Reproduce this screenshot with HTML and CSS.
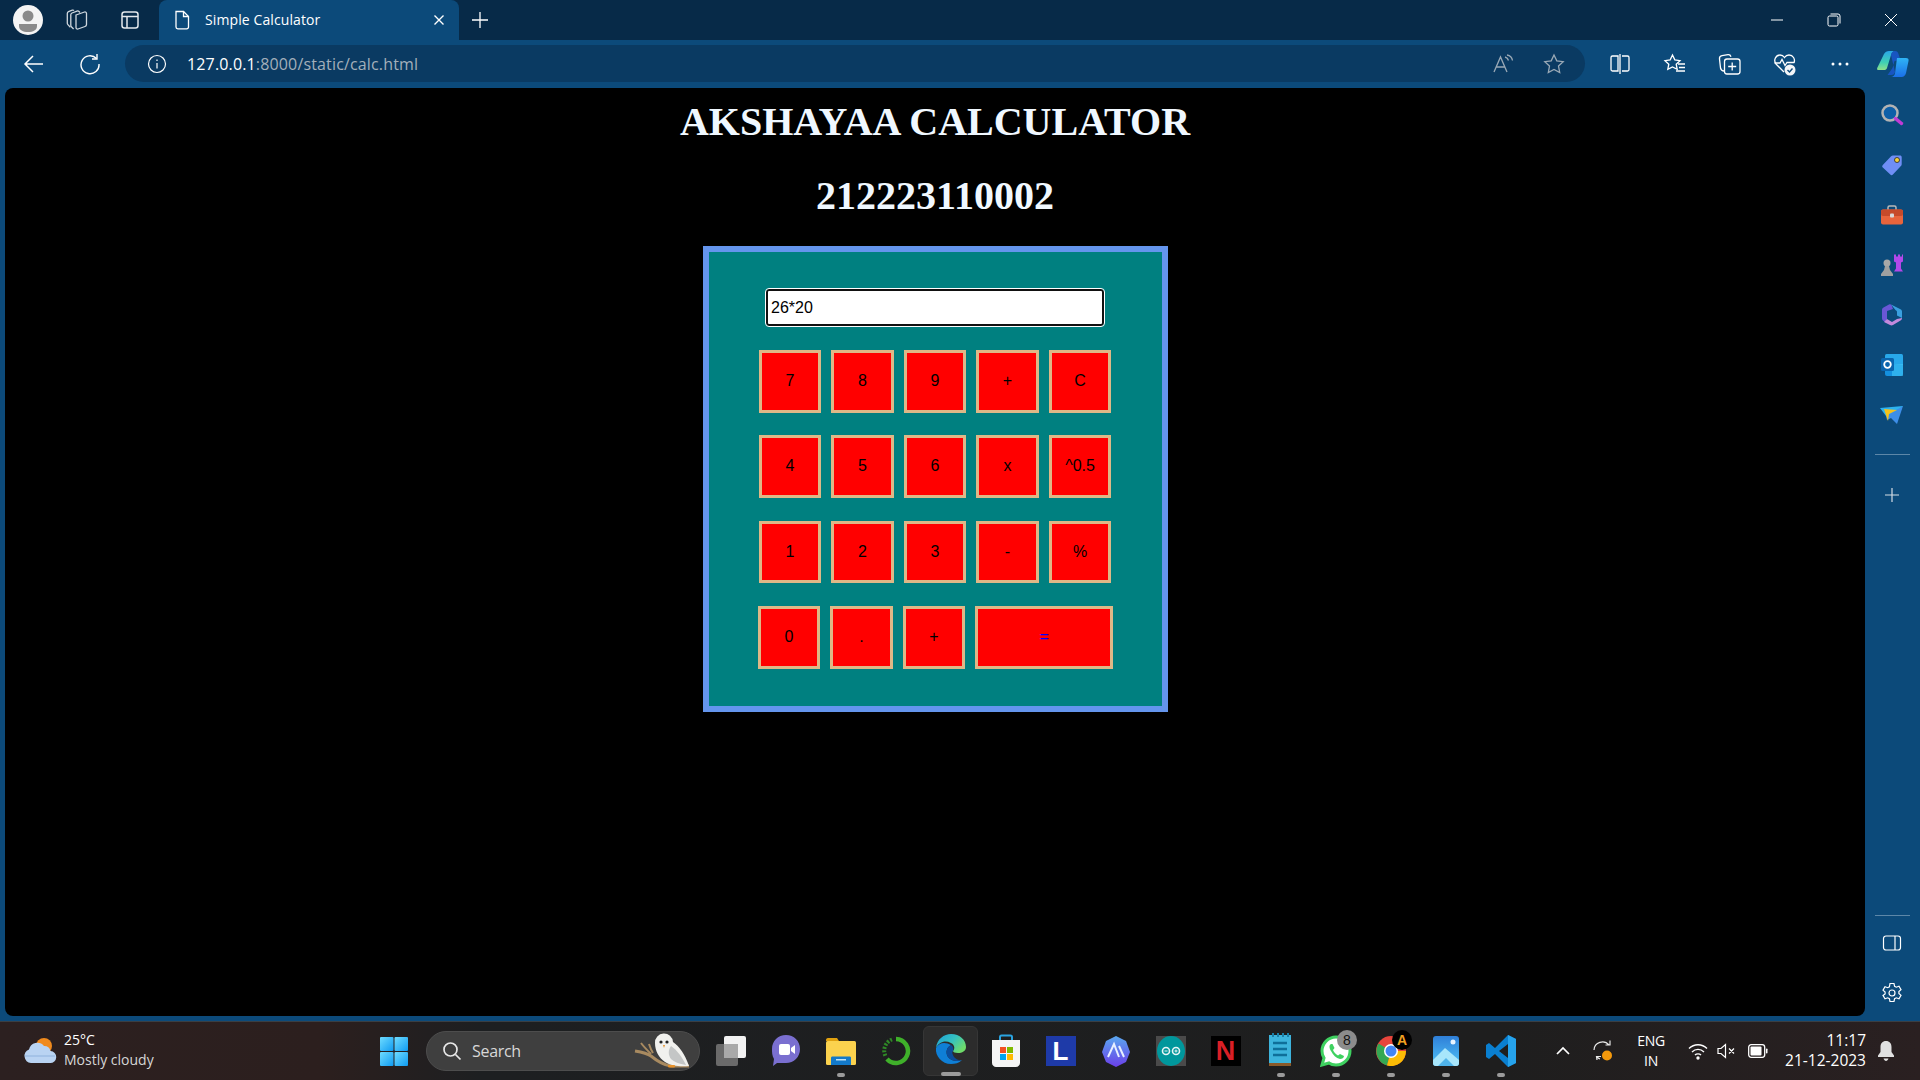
FILE: index.html
```html
<!DOCTYPE html>
<html lang="en">
<head>
    <meta charset="UTF-8">
    <title>Simple Calculator</title>
    <link rel="stylesheet" href="styles.css">
</head>
<body>
<div class="desktop">

    <!-- browser title bar -->
    <div class="titlebar">
        <div class="profile">
            <svg width="30" height="30" viewBox="0 0 30 30"><circle cx="15" cy="15" r="15" fill="#f4f4f4"/><circle cx="15" cy="11" r="5.500" fill="#8a8a8a"/><path d="M6 19h18v2c0 4-4 6-9 6s-9-2-9-6z" fill="#8a8a8a"/></svg>
        </div>
        <div class="title-btn workspaces">
            <svg width="24" height="22" viewBox="0 0 24 22" fill="none" stroke="#cfd7de" stroke-width="1.300"><path d="M11 6l8.500-3c1-.3 2 .3 2 1.500v11c0 1-.6 1.700-1.500 2l-7 2.500c-1 .3-2-.3-2-1.500V7.500c0-.7 0-1.200 0-1.500z"/><path d="M15 3.500l-1-1c-.6-.6-1.200-.7-2-.4L7 4c-.8.3-1.200 1-1.200 1.800v10.500c0 .7.300 1.200.8 1.700l2 2"/><path d="M9 1.500C8.500 1 8 1 7.300 1.200L3.500 2.600C2.700 2.900 2.300 3.500 2.300 4.400v9.800c0 .7.300 1.200.8 1.700l2.300 2.300"/></svg>
        </div>
        <div class="title-btn tab-actions">
            <svg width="20" height="20" viewBox="0 0 20 20" fill="none" stroke="#e3e8ec" stroke-width="1.500"><rect x="2" y="2" width="16" height="16" rx="2.500"/><path d="M2 6.500h16M7 6.500V18"/></svg>
        </div>
        <div class="tab">
            <svg class="tab-icon" width="18" height="20" viewBox="0 0 18 20" fill="none" stroke="#fff" stroke-width="1.300"><path d="M3 1.500h7.500l5 5V17a1.800 1.800 0 0 1-1.800 1.800H4.800A1.800 1.800 0 0 1 3 17z"/><path d="M10.500 1.500v5h5"/></svg>
            <span class="tab-title">Simple Calculator</span>
            <svg class="tab-close" width="12" height="12" viewBox="0 0 12 12" stroke="#fff" stroke-width="1.400"><path d="M1.500 1.500l9 9M10.500 1.500l-9 9"/></svg>
        </div>
        <div class="title-btn new-tab">
            <svg width="18" height="18" viewBox="0 0 18 18" stroke="#fff" stroke-width="1.300"><path d="M9 1v16M1 9h16"/></svg>
        </div>
        <div class="window-controls">
            <div class="window-btn"><svg width="14" height="14" viewBox="0 0 14 14" stroke="#fff" stroke-width="1"><path d="M1 7h12"/></svg></div>
            <div class="window-btn"><svg width="14" height="14" viewBox="0 0 14 14" fill="none" stroke="#fff" stroke-width="1"><rect x="1" y="3" width="10" height="10" rx="1.500"/><path d="M3.500 1h7.500a2 2 0 0 1 2 2v7.500"/></svg></div>
            <div class="window-btn"><svg width="14" height="14" viewBox="0 0 14 14" stroke="#fff" stroke-width="1"><path d="M1 1l12 12M13 1L1 13"/></svg></div>
        </div>
    </div>

    <!-- address bar row -->
    <div class="toolbar">
        <div class="nav-btn">
            <svg width="22" height="20" viewBox="0 0 22 20" fill="none" stroke="#fff" stroke-width="1.500"><path d="M20 10H2M10 2l-8 8 8 8"/></svg>
        </div>
        <div class="nav-btn">
            <svg width="22" height="22" viewBox="0 0 22 22" fill="none" stroke="#fff" stroke-width="1.400"><path d="M17.500 5.500A9 9 0 1 0 20 11"/><path d="M18 1v5h-5"/></svg>
        </div>
        <div class="address-bar">
            <svg class="info-icon" width="20" height="20" viewBox="0 0 20 20" fill="none" stroke="#fff" stroke-width="1.200"><circle cx="10" cy="10" r="8.500"/><path d="M10 9v5.500M10 5.500v1.500"/></svg>
            <span class="url"><span class="url-host">127.0.0.1</span>:8000/static/calc.html</span>
            <div class="address-actions">
                <svg width="22" height="20" viewBox="0 0 22 20" fill="none" stroke="#9aa9b6" stroke-width="1.300"><path d="M2 18L8.500 3 15 18M4.500 13h8"/><path d="M13 3c2 .5 3 1.500 3.500 3.500M15 1c3 .5 5 2.500 5.500 5.500"/></svg>
                <svg width="22" height="22" viewBox="0 0 22 22" fill="none" stroke="#9aa9b6" stroke-width="1.300"><path d="M11 2l2.800 5.900 6.400.8-4.700 4.400 1.200 6.400-5.700-3.100-5.700 3.100 1.200-6.400L1.800 8.700l6.400-.8z"/></svg>
            </div>
        </div>
        <div class="tool-buttons">
            <div class="tool-btn"><svg width="22" height="22" viewBox="0 0 22 22" fill="none" stroke="#fff" stroke-width="1.300"><path d="M9 3H3.500A1.500 1.500 0 0 0 2 4.500v12A1.500 1.500 0 0 0 3.500 18H9zM11 1v20M13 3h5.500A1.500 1.500 0 0 1 20 4.500v12a1.500 1.500 0 0 1-1.500 1.500H13"/></svg></div>
            <div class="tool-btn"><svg width="24" height="22" viewBox="0 0 24 22" fill="none" stroke="#fff" stroke-width="1.300"><path d="M9.500 2l2.300 4.900 5.200.7-3.800 3.600 1 5.200-4.700-2.500-4.700 2.500 1-5.200L2 7.600l5.200-.7z"/><path d="M15 11h7M16 14.500h6M13 18h9"/></svg></div>
            <div class="tool-btn"><svg width="24" height="24" viewBox="0 0 24 24" fill="none" stroke="#fff" stroke-width="1.300"><path d="M6 19c-2 0-3-1-3.500-3L1.500 7C1.300 5 2 4 4 3.700l6-1c1.500-.2 2.500.5 3 2"/><rect x="6.500" y="7" width="15.500" height="15" rx="2.500"/><path d="M14.200 10.500v8M10.200 14.500h8"/></svg></div>
            <div class="tool-btn">
                <svg width="24" height="24" viewBox="0 0 24 24"><path d="M11 20L3 12C0 8 3 3 7 3c2 0 3.500 1 4.500 2.500C12.500 4 14 3 16 3c4 0 6.500 4 5 8" fill="none" stroke="#fff" stroke-width="1.300"/><path d="M1.500 11H7l2-3.500 3 6 2-3h7" fill="none" stroke="#fff" stroke-width="1.300"/><circle cx="17" cy="18" r="5.500" fill="#f4f6f8"/><path d="M14.500 18l2 2 3-3.500" fill="none" stroke="#0c4a7a" stroke-width="1.400"/></svg>
            </div>
            <div class="tool-btn"><svg width="22" height="6" viewBox="0 0 22 6" fill="#fff"><circle cx="4" cy="3" r="1.500"/><circle cx="11" cy="3" r="1.500"/><circle cx="18" cy="3" r="1.500"/></svg></div>
        </div>
        <div class="copilot">
            <svg width="32" height="28" viewBox="0 0 32 28">
                <defs>
                    <linearGradient id="copA" x1="0" y1="0" x2="0" y2="1"><stop offset="0" stop-color="#2aa6e8"/><stop offset=".6" stop-color="#3fd0b4"/><stop offset="1" stop-color="#8fe08a"/></linearGradient>
                    <linearGradient id="copB" x1="0" y1="0" x2="0" y2="1"><stop offset="0" stop-color="#2fb4f5"/><stop offset="1" stop-color="#1b6fe8"/></linearGradient>
                </defs>
                <path d="M7 4c1-2 3-3 5-3h6c-2 0-3 1-4 4l-4 13c-.5 1.500-1.500 2-3 2H1c-1 0-1-1-.8-2z" fill="url(#copA)"/>
                <path d="M14 5c.8-3 2-4 4-4 2 0 3 1 3.500 3l2 6-6 1-2 7-5 7h4c2 0 3-1 3.500-3z" fill="#1a56c9" opacity=".9"/>
                <path d="M20 8h9c2 0 3 1 2.500 3L29 23c-.5 2-2 4-4.500 4H14c2 0 3.500-1.500 4-3.500z" fill="url(#copB)"/>
            </svg>
        </div>
    </div>

    <div class="browser-body">
        <main class="page">
            <h1 class="page-title">AKSHAYAA CALCULATOR</h1>
            <h1 class="page-title">212223110002</h1>

            <div class="calculator">
                <input class="display" type="text" value="26*20">
                <div class="keypad">
                    <div class="key-row">
                        <button class="key">7</button>
                        <button class="key">8</button>
                        <button class="key">9</button>
                        <button class="key">+</button>
                        <button class="key">C</button>
                    </div>
                    <div class="key-row">
                        <button class="key">4</button>
                        <button class="key">5</button>
                        <button class="key">6</button>
                        <button class="key">x</button>
                        <button class="key">^0.5</button>
                    </div>
                    <div class="key-row">
                        <button class="key">1</button>
                        <button class="key">2</button>
                        <button class="key">3</button>
                        <button class="key">-</button>
                        <button class="key">%</button>
                    </div>
                    <div class="key-row key-row-last">
                        <button class="key">0</button>
                        <button class="key">.</button>
                        <button class="key">+</button>
                        <button class="key key-equals">=</button>
                    </div>
                </div>
            </div>
        </main>

        <aside class="sidebar">
            <div class="side-item"><svg width="24" height="24" viewBox="0 0 24 24"><circle cx="10" cy="10" r="7.500" fill="#0e5fa8" stroke="#b3b3b3" stroke-width="2.500"/><path d="M15.500 15.500l6 5" stroke="#c13bd6" stroke-width="3.500" stroke-linecap="round"/></svg></div>
            <div class="side-item"><svg width="24" height="24" viewBox="0 0 24 24"><path d="M13 2.500h7c1 0 1.700.7 1.700 1.700v7c0 .8-.2 1.300-.8 1.900l-8 8.500c-.8.800-1.800.8-2.600 0l-7.500-7c-.8-.8-.8-1.900 0-2.700l8.300-8.600c.6-.6 1.100-.8 1.900-.8z" fill="#6f8ef5"/><circle cx="17" cy="7" r="2.500" fill="#f5d13b" stroke="#222" stroke-width=".8"/></svg></div>
            <div class="side-item"><svg width="24" height="24" viewBox="0 0 24 24"><path d="M8 7V4.500C8 3.500 8.500 3 9.500 3h5c1 0 1.500.5 1.500 1.500V7" fill="none" stroke="#b9b9b9" stroke-width="1.500"/><rect x="1" y="6.500" width="22" height="15" rx="2" fill="#e8643c"/><rect x="1" y="6.500" width="22" height="6.500" rx="2" fill="#c64a2a"/><rect x="10" y="10.500" width="4" height="4" rx="1" fill="#d9d9d9"/></svg></div>
            <div class="side-item"><svg width="24" height="24" viewBox="0 0 24 24"><path d="M14 1.500h2v2h2v-2h2v2h2v-2h1v7l-2 1v6l2 3h-9l2-3v-6l-2-1z" fill="#b348ea"/><circle cx="7" cy="10" r="3.500" fill="#a8a8a8"/><path d="M5 13h4l1 4 3 4v2H1v-2l3-4z" fill="#a0a0a0"/></svg></div>
            <div class="side-item">
                <svg width="24" height="24" viewBox="0 0 24 24">
                    <path d="M2 7c0-1 .5-2 1.500-2.500L9 1.500c1-.5 2-.2 2.500.5L13 6 7 8v8l-2 3-2-1.500C2.300 17 2 16 2 15z" fill="#6a57d6"/>
                    <path d="M11 1.500l10 5c.7.500 1 1.200 1 2V15l-5-2.500V9c0-1-.5-1.500-1.300-1.800z" fill="#3aa0e0"/>
                    <path d="M7 16l5 3 5-3 5-1c0 1-.5 2-1.500 2.500L13 22c-1 .5-2 .5-3 0l-6-3z" fill="#c389dc"/>
                    <path d="M8 9l4-2 5 2v5l-5 3-4-2.500z" fill="#0c4a7a"/>
                </svg>
            </div>
            <div class="side-item"><svg width="24" height="24" viewBox="0 0 24 24"><rect x="5" y="1" width="18" height="12" rx="1.500" fill="#28a8ea"/><path d="M5 12h18v9a2 2 0 0 1-2 2H7a2 2 0 0 1-2-2z" fill="#1490df"/><path d="M12 12l11-1v12H12z" fill="#50d9ff" opacity=".45"/><rect x="1" y="5" width="13" height="13" rx="1.500" fill="#0a64ad"/><circle cx="7.500" cy="11.500" r="3.300" fill="none" stroke="#fff" stroke-width="1.800"/></svg></div>
            <div class="side-item"><svg width="24" height="20" viewBox="0 0 24 20"><path d="M0 3l23-2-8 9-9 1z" fill="#2db3f0"/><path d="M6 11L23 1l-6 18-6-6-4 2z" fill="#3d8ee8"/><path d="M4 4l13 1-8 4-1 7z" fill="#f5c21a"/></svg></div>
            <div class="side-divider"></div>
            <div class="side-item"><svg width="16" height="16" viewBox="0 0 16 16" stroke="#d5dde4" stroke-width="1.200"><path d="M8 1v14M1 8h14"/></svg></div>
            <div class="sidebar-bottom">
                <div class="side-divider"></div>
                <div class="side-item"><svg width="20" height="18" viewBox="0 0 20 18" fill="none" stroke="#fff" stroke-width="1.200"><rect x="1.500" y="2" width="17" height="14" rx="2.500"/><path d="M13 2v14"/></svg></div>
                <div class="side-item"><svg width="22" height="22" viewBox="0 0 22 22" fill="none" stroke="#fff" stroke-width="1.200"><circle cx="11" cy="11" r="3"/><path d="M9 1.500h4l.6 2.800 1.700.9 2.700-1 2 3.400-2.100 1.900v2l2.100 1.900-2 3.400-2.700-1-1.700.9-.6 2.800H9l-.6-2.800-1.700-.9-2.700 1-2-3.400L4.100 12v-2L2 8.100l2-3.400 2.700 1 1.700-.9z"/></svg></div>
            </div>
        </aside>
    </div>

    <!-- windows taskbar -->
    <footer class="taskbar">
        <div class="weather">
            <svg width="34" height="28" viewBox="0 0 34 28"><circle cx="21" cy="9" r="8" fill="#f08a1d"/><path d="M8 26a7 7 0 0 1-2-13.500A8.500 8.500 0 0 1 21 9a6.500 6.500 0 0 1 6.500 5A6 6 0 0 1 27 26z" fill="#b9d3f2"/><path d="M2 19h30" stroke="#8fb2dd" stroke-width="1"/></svg>
            <div class="weather-text">
                <div class="weather-temp">25°C</div>
                <div class="weather-desc">Mostly cloudy</div>
            </div>
        </div>

        <div class="start-btn">
            <svg width="28" height="29" viewBox="0 0 28 29"><defs><linearGradient id="winA" x1="0" y1="0" x2="1" y2="1"><stop offset="0" stop-color="#6fdcff"/><stop offset="1" stop-color="#0f9bf2"/></linearGradient></defs><rect width="13.500" height="14" rx="1" fill="url(#winA)"/><rect x="14.500" width="13.500" height="14" rx="1" fill="url(#winA)"/><rect y="15" width="13.500" height="14" rx="1" fill="url(#winA)"/><rect x="14.500" y="15" width="13.500" height="14" rx="1" fill="url(#winA)"/></svg>
        </div>

        <div class="search-box">
            <svg width="20" height="20" viewBox="0 0 20 20" fill="none" stroke="#e8e8e8" stroke-width="1.700"><circle cx="8.500" cy="8.500" r="6.500"/><path d="M13.500 13.500l5 5"/></svg>
            <span class="search-label">Search</span>
            <svg class="owl" width="66" height="40" viewBox="0 0 66 40">
                <path d="M2 21c6 1 12 2 16 5 6 5 12 9 20 10h18" fill="none" stroke="#a88a60" stroke-width="3"/>
                <path d="M8 13c3 4 6 7 10 11M16 14c1 3 2 6 4 9" fill="none" stroke="#a88a60" stroke-width="2"/>
                <path d="M22 13a9 9 0 0 1 18-1c6 4 12 12 16 24-8 1-18 0-24-4-6-4-10-11-10-19z" fill="#f1f1ee"/>
                <path d="M38 16c6 4 11 11 15 19-7-1-12-3-15-6-3-4-3-9 0-13z" fill="#c4c6c6"/>
                <circle cx="28" cy="12" r="1.600" fill="#222"/>
                <circle cx="34" cy="12" r="1.600" fill="#222"/>
                <path d="M30 15h2l-1 3z" fill="#e8922a"/>
                <rect x="35" y="35" width="7" height="2.500" rx="1" fill="#e8922a"/>
            </svg>
        </div>

        <div class="task-icons">
            <div class="task-icon">
                <svg width="32" height="32" viewBox="0 0 32 32"><rect x="1" y="9" width="22" height="22" rx="2" fill="#6a6a6a"/><rect x="9" y="1" width="22" height="22" rx="2" fill="#f2f2f2"/><rect x="9" y="9" width="14" height="14" fill="#a9a9a9"/></svg>
            </div>
            <div class="task-icon">
                <svg width="30" height="34" viewBox="0 0 30 34"><path d="M15 1c8 0 14 6 14 14s-6 14-14 14H6l-4 3 1-7C1 22 1 18 1 15 1 7 7 1 15 1z" fill="#7a6fd0"/><rect x="8" y="10" width="11" height="11" rx="2" fill="#fff"/><path d="M20 14l4-3v9l-4-3z" fill="#fff"/></svg>
            </div>
            <div class="task-icon has-dot">
                <svg width="30" height="30" viewBox="0 0 30 30"><path d="M0 4c0-1 .5-2 2-2h9l2 3H0z" fill="#e0a10f"/><rect y="5" width="30" height="24" rx="1.500" fill="#fbd24e"/><path d="M5 29v-7c0-1 .5-1.500 1.500-1.500h17c1 0 1.500.5 1.500 1.500v7z" fill="#1379c9"/><rect x="10" y="23" width="10" height="1.500" fill="#bfe3f7"/></svg>
            </div>
            <div class="task-icon">
                <svg width="30" height="30" viewBox="0 0 30 30" fill="none"><path d="M15 3a12 12 0 1 1-9 20" stroke="#3fb02a" stroke-width="4.500"/><path d="M11 3.500A12 12 0 0 0 5 21" stroke="#2f8a26" stroke-width="4" stroke-dasharray="2 1.500"/></svg>
            </div>
            <div class="task-icon active has-dot wide-dot">
                <svg class="edge-logo" width="32" height="32" viewBox="0 0 32 32">
                    <defs><linearGradient id="edgeA" x1="0" y1="0" x2="1" y2=".6"><stop offset="0" stop-color="#1c9fd8"/><stop offset=".55" stop-color="#35c1c0"/><stop offset="1" stop-color="#6fdc6a"/></linearGradient></defs>
                    <path d="M1 15C2 6 9 1 16 1c9 0 15 6 15 13 0 4-4 6-8 6-3 0-5-1-5-2 2-2 2-6-2-8C10 7 4 9 1 15z" fill="url(#edgeA)"/>
                    <path d="M1 15c-1 8 6 16 15 16 4 0 8-1 11-4-5 2-11 1-14-3-3-5-1-10 3-12-5-3-12-3-15 3z" fill="#0f7fd6"/>
                    <path d="M16 12c-4 2-6 7-3 12 3 4 9 5 14 3-4 1-8-2-9-5-1-2-1-3 0-4 1-2 0-5-2-6z" fill="#0b4d9c"/>
                </svg>
            </div>
            <div class="task-icon">
                <svg width="30" height="34" viewBox="0 0 30 34"><path d="M9 8V3c0-1 .5-1.500 1.500-1.500h9c1 0 1.500.5 1.500 1.500v5" fill="none" stroke="#2aa3e0" stroke-width="2"/><path d="M1 6h28v23c0 2-2 4-4 4H5c-2 0-4-2-4-4z" fill="#f5f5f5"/><rect x="9" y="13" width="6" height="6" fill="#f25022"/><rect x="16" y="13" width="6" height="6" fill="#7fba00"/><rect x="9" y="20" width="6" height="6" fill="#00a4ef"/><rect x="16" y="20" width="6" height="6" fill="#ffb900"/></svg>
            </div>
            <div class="task-icon">
                <div class="tile-l">L</div>
            </div>
            <div class="task-icon">
                <svg width="28" height="32" viewBox="0 0 28 32"><defs><linearGradient id="hexA" x1="0" y1="0" x2="0" y2="1"><stop offset="0" stop-color="#5aa8f0"/><stop offset="1" stop-color="#6a3fe8"/></linearGradient></defs><path d="M14 1l10 5 4 11-4 10-10 5-10-5L0 17 4 6z" fill="url(#hexA)"/><path d="M6 22l6-13 5 13M17 11l5 11" fill="none" stroke="#e8f0ff" stroke-width="2"/></svg>
            </div>
            <div class="task-icon">
                <div class="tile-arduino"><svg width="30" height="30" viewBox="0 0 30 30"><ellipse cx="15" cy="15" rx="14" ry="15" fill="#00979c"/><g fill="none" stroke="#e8f5f5" stroke-width="1.600"><circle cx="10" cy="15" r="3.500"/><circle cx="20" cy="15" r="3.500"/></g><path d="M8.500 15h3M18.500 15h3M20 13.500v3" stroke="#e8f5f5" stroke-width="1"/></svg></div>
            </div>
            <div class="task-icon">
                <div class="tile-netflix">N</div>
            </div>
            <div class="task-icon has-dot">
                <svg width="24" height="36" viewBox="0 0 24 36"><rect y="2" width="22" height="31" fill="#3db4dc"/><rect y="30" width="22" height="3" fill="#8a5a2b"/><path d="M4 0v4M9 0v4M14 0v4M19 0v4" stroke="#1b7fa6" stroke-width="2"/><path d="M4 10h14M4 16h14M4 22h14" stroke="#0f6f99" stroke-width="2.500"/></svg>
            </div>
            <div class="task-icon has-dot">
                <svg width="32" height="32" viewBox="0 0 32 32"><path d="M16 2a14 14 0 0 1 0 28c-3 0-5-.5-7-2l-7 2 2-7c-1.500-2-2-4-2-7A14 14 0 0 1 16 2z" fill="#fff" stroke="#3fd160" stroke-width="3"/><path d="M11 9c-2 1-2 4 0 7 2 4 5 7 9 8 2 0 4-1 4-3l-4-2-2 1.500c-2-1-4-3-5-5.500l1.500-2-2-4z" fill="#3fd160"/></svg>
                <span class="task-badge badge-grey">8</span>
            </div>
            <div class="task-icon has-dot">
                <svg width="30" height="30" viewBox="0 0 30 30"><circle cx="15" cy="15" r="15" fill="#e8453c"/><path d="M15 15L2.500 7.500A15 15 0 0 0 11 29.500z" fill="#34a853"/><path d="M15 15l-4 14.500A15 15 0 0 0 30 15z" fill="#fbbc05"/><circle cx="15" cy="15" r="7" fill="#fff"/><circle cx="15" cy="15" r="5.500" fill="#4285f4"/></svg>
                <span class="task-badge badge-black">A</span>
            </div>
            <div class="task-icon has-dot">
                <svg width="26" height="30" viewBox="0 0 26 30"><defs><linearGradient id="photoA" x1="0" y1="0" x2="0" y2="1"><stop offset="0" stop-color="#2f7fd8"/><stop offset="1" stop-color="#4fc3f7"/></linearGradient></defs><rect width="26" height="30" rx="3" fill="url(#photoA)"/><circle cx="20" cy="6" r="2.500" fill="#e8f4ff"/><path d="M0 24l12-12 14 12v3a3 3 0 0 1-3 3H3a3 3 0 0 1-3-3z" fill="#a8e6fb"/><path d="M5 30l8-8 8 8z" fill="#4fb3ea"/></svg>
            </div>
            <div class="task-icon has-dot">
                <svg width="30" height="32" viewBox="0 0 30 32"><path d="M22 0l8 4v24l-8 4L9 19l-6 5-3-2v-12l3-2 6 5z" fill="#0a7fd0"/><path d="M22 9v14l-9-7z" fill="#1e1e1e"/><path d="M22 0l8 4v24l-8 4z" fill="#26a3ec"/></svg>
            </div>
        </div>

        <div class="tray">
            <div class="tray-item tray-chevron"><svg width="14" height="10" viewBox="0 0 14 10" fill="none" stroke="#fff" stroke-width="1.700"><path d="M1 8l6-6 6 6"/></svg></div>
            <div class="tray-item tray-sync"><svg width="22" height="24" viewBox="0 0 22 24" fill="none" stroke="#e8e8e8" stroke-width="1.200"><path d="M2 11a8.500 8.500 0 0 1 15-5M18 1.500V6h-4.500M5 21l-.5-3.500H9M4.500 17.500c1 1 2 2 3.500 2.500"/><circle cx="15" cy="16.500" r="5" fill="#f59a0c" stroke="none"/></svg></div>
            <div class="tray-lang">
                <div>ENG</div>
                <div>IN</div>
            </div>
            <div class="tray-item tray-wifi"><svg width="20" height="18" viewBox="0 0 20 18" fill="none" stroke="#fff" stroke-width="1.400"><path d="M1 6.500c5-5 13-5 18 0M4 10c3.500-3.500 8.500-3.500 12 0M7 13c1.500-1.500 4.500-1.500 6 0"/><circle cx="10" cy="16" r="1" fill="#fff"/></svg></div>
            <div class="tray-item tray-sound"><svg width="20" height="16" viewBox="0 0 20 16" fill="none" stroke="#fff" stroke-width="1.200"><path d="M1 5.500v5h3l4.500 4v-13L4 5.500zM12 5.500l5 5M17 5.500l-5 5"/></svg></div>
            <div class="tray-item tray-battery"><svg width="20" height="14" viewBox="0 0 20 14"><rect x=".7" y=".7" width="16" height="12.600" rx="2.500" fill="none" stroke="#fff" stroke-width="1.300"/><rect x="2.500" y="2.500" width="11" height="9" rx="1" fill="#fff"/><rect x="18" y="4.500" width="1.500" height="5" rx=".7" fill="#fff"/></svg></div>
            <div class="clock">
                <div>11:17</div>
                <div>21-12-2023</div>
            </div>
            <div class="tray-item tray-bell"><svg width="16" height="20" viewBox="0 0 16 20" fill="#e0e0e0"><path d="M8 0c-3.500 0-5.500 2.500-5.500 6v5L0 14.500v1.500h16v-1.500L13.500 11V6C13.500 2.500 11.500 0 8 0z"/><path d="M5.500 17.500h5C10 19 9 20 8 20s-2-1-2.500-2.500z"/></svg></div>
        </div>
    </footer>
</div>
</body>
</html>
```

FILE: styles.css
```css
* {
    box-sizing: border-box;
}

body {
    margin: 0;
    padding: 0;
    background-color: #000;
    font-family: "Open Sans", "Noto Sans", sans-serif;
    color: #fff;
}

.desktop {
    width: 1920px;
    height: 1080px;
    overflow: hidden;
    display: flex;
    flex-direction: column;
    background-color: #0c4a7a;
}

/* title bar */
.titlebar {
    height: 40px;
    flex: none;
    display: flex;
    align-items: flex-end;
    background-color: #072a48;
}

.profile {
    width: 40px;
    height: 40px;
    margin-left: 8px;
    display: flex;
    align-items: center;
    justify-content: center;
}

.title-btn {
    height: 40px;
    display: flex;
    align-items: center;
    justify-content: center;
}

.workspaces {
    width: 58px;
}

.tab-actions {
    width: 48px;
}

.new-tab {
    width: 42px;
}

.tab {
    width: 300px;
    height: 40px;
    margin-left: 5px;
    padding: 0 14px;
    display: flex;
    align-items: center;
    background-color: #0c4a7a;
    border-radius: 8px 8px 0 0;
}

.tab-title {
    flex: 1;
    margin: 0 0 2px 14px;
    font-size: 14px;
    letter-spacing: 0.1px;
}

.window-controls {
    margin-left: auto;
    margin-right: 1px;
    display: flex;
}

.window-btn {
    width: 57px;
    height: 40px;
    display: flex;
    align-items: center;
    justify-content: center;
}

/* toolbar */
.toolbar {
    height: 48px;
    flex: none;
    padding: 5px 0 6px 6px;
    display: flex;
    align-items: center;
}

.nav-btn {
    width: 56px;
    display: flex;
    justify-content: center;
}

.address-bar {
    width: 1460px;
    height: 37px;
    margin-left: 7px;
    padding: 0 20px 0 22px;
    display: flex;
    align-items: center;
    background-color: #0a3a62;
    border-radius: 19px;
}

.info-icon {
    margin-right: 20px;
}

.url {
    font-size: 16px;
    letter-spacing: 0.15px;
    color: #a3afba;
}

.url-host {
    color: #fff;
}

.address-actions {
    margin-left: auto;
    display: flex;
    align-items: center;
    gap: 29px;
}

.tool-buttons {
    margin-left: 7px;
    display: flex;
}

.tool-btn {
    width: 55px;
    display: flex;
    justify-content: center;
    align-items: center;
}

.copilot {
    margin-left: 3px;
    width: 45px;
    display: flex;
    justify-content: center;
}

/* page area */
.browser-body {
    flex: 1;
    display: flex;
    min-height: 0;
}

.page {
    width: 1860px;
    margin: 0 0 5px 5px;
    padding-top: 11px;
    background-color: #000;
    border-radius: 8px;
    font-family: "Liberation Serif", serif;
}

.page-title {
    margin: 0 0 28px;
    font-size: 40px;
    line-height: 46px;
    font-weight: bold;
    text-align: center;
    color: aliceblue;
}

.page-title + .page-title {
    margin-bottom: 27px;
}

.calculator {
    width: 465px;
    height: 466px;
    margin: 0 auto;
    padding-top: 37px;
    background-color: teal;
    border: 6px solid cornflowerblue;
}

.display {
    display: block;
    width: 338px;
    height: 37px;
    margin: 0 auto;
    padding: 0 3px;
    background-color: #fff;
    border: 2px solid #111;
    border-radius: 3px;
    outline: 1px solid #fff;
    font-family: "Liberation Sans", sans-serif;
    font-size: 16px;
    color: #000;
}

.keypad {
    margin-top: 24px;
    display: flex;
    flex-direction: column;
    gap: 22.7px;
}

.key-row {
    display: flex;
    justify-content: center;
    gap: 10px;
}

.key-row-last {
    padding-left: 1px;
}

.key {
    width: 62.5px;
    height: 62.7px;
    padding: 0 0 1px;
    background-color: red;
    border: 3px solid burlywood;
    font-family: "Liberation Sans", sans-serif;
    font-size: 16px;
    color: #000;
}

.key-equals {
    width: 138px;
    color: blue;
}

/* edge sidebar */
.sidebar {
    flex: 1;
    padding: 2px 0 3px;
    display: flex;
    flex-direction: column;
    align-items: center;
}

.side-item {
    width: 100%;
    height: 50px;
    flex: none;
    display: flex;
    align-items: center;
    justify-content: center;
    padding-right: 1px;
}

.side-divider {
    width: 35px;
    height: 1px;
    margin: 14px 0 15px;
    flex: none;
    background-color: #5d87a8;
}

.sidebar-bottom {
    width: 100%;
    margin-top: auto;
    display: flex;
    flex-direction: column;
    align-items: center;
}

.sidebar-bottom .side-divider {
    margin: 0 0 2px;
}

/* taskbar */
.taskbar {
    height: 59px;
    flex: none;
    position: relative;
    display: flex;
    align-items: center;
    border-top: 1px solid #3a3f44;
    background: linear-gradient(90deg, #2c2020 0, #2c1f1e 320px, #1d1f21 480px, #1e1e1e 1500px, #2a2021 1920px);
}

.weather {
    width: 380px;
    padding-left: 23px;
    display: flex;
    align-items: center;
    gap: 7px;
}

.weather-text {
    margin-bottom: 2px;
    font-size: 14px;
    line-height: 20px;
}

.weather-desc {
    color: #d6d6d6;
}

.start-btn {
    width: 28px;
    height: 29px;
}

.search-box {
    width: 274px;
    height: 40px;
    margin-left: 18px;
    padding-left: 15px;
    position: relative;
    display: flex;
    align-items: center;
    gap: 10px;
    background-color: #3f3f3f;
    border: 1px solid #4d4d4d;
    border-radius: 20px;
}

.search-label {
    font-size: 16px;
    letter-spacing: -0.3px;
    color: #d8d8d8;
}

.owl {
    position: absolute;
    right: 0;
    top: -2px;
}

.task-icons {
    margin-left: 3px;
    display: flex;
}

.task-icon {
    width: 55px;
    height: 50px;
    position: relative;
    display: flex;
    align-items: center;
    justify-content: center;
}

.task-icon.active {
    background-color: #2c2c2c;
    border: 1px solid #363636;
    border-radius: 6px;
}

.edge-logo {
    margin-bottom: 4px;
}

.has-dot::after {
    content: "";
    position: absolute;
    left: 50%;
    bottom: -1px;
    width: 8px;
    height: 4px;
    margin-left: -4px;
    background-color: #9b9b9b;
    border-radius: 2px;
}

.wide-dot::after {
    width: 20px;
    margin-left: -10px;
}

.tile-l {
    width: 30px;
    height: 30px;
    background-color: #1e3aa8;
    font-family: "Liberation Sans", sans-serif;
    font-size: 26px;
    font-weight: bold;
    line-height: 30px;
    text-align: center;
    color: #fff;
}

.tile-arduino {
    width: 30px;
    height: 30px;
    background-color: #4a4a4a;
}

.tile-netflix {
    width: 30px;
    height: 30px;
    background-color: #000;
    font-family: "Liberation Sans", sans-serif;
    font-size: 27px;
    font-weight: bold;
    line-height: 30px;
    text-align: center;
    color: #d81f26;
}

.task-badge {
    position: absolute;
    top: 4px;
    right: 6px;
    width: 20px;
    height: 20px;
    border-radius: 50%;
    font-family: "Liberation Sans", sans-serif;
    font-size: 14px;
    line-height: 20px;
    text-align: center;
}

.badge-grey {
    background-color: #8c8c8c;
    color: #111;
}

.badge-black {
    background-color: #000;
    font-weight: bold;
    color: #f0a020;
}

.tray {
    flex: 1;
    display: flex;
    align-items: center;
}

.tray-item {
    display: flex;
    align-items: center;
    justify-content: center;
}

.tray-chevron {
    width: 16px;
    margin-left: 27px;
}

.tray-sync {
    width: 24px;
    margin-left: 20px;
}

.tray-lang {
    width: 40px;
    margin-left: 16px;
    font-size: 14px;
    line-height: 20px;
    text-align: center;
    letter-spacing: -0.3px;
}

.tray-wifi {
    width: 20px;
    margin-left: 17px;
}

.tray-sound {
    width: 20px;
    margin-left: 9px;
}

.tray-battery {
    width: 20px;
    margin-left: 11px;
}

.clock {
    width: 90px;
    margin: 0 0 2px 8px;
    font-size: 15.500px;
    line-height: 20px;
    text-align: right;
}

.tray-bell {
    width: 16px;
    margin-left: 12px;
}
```
